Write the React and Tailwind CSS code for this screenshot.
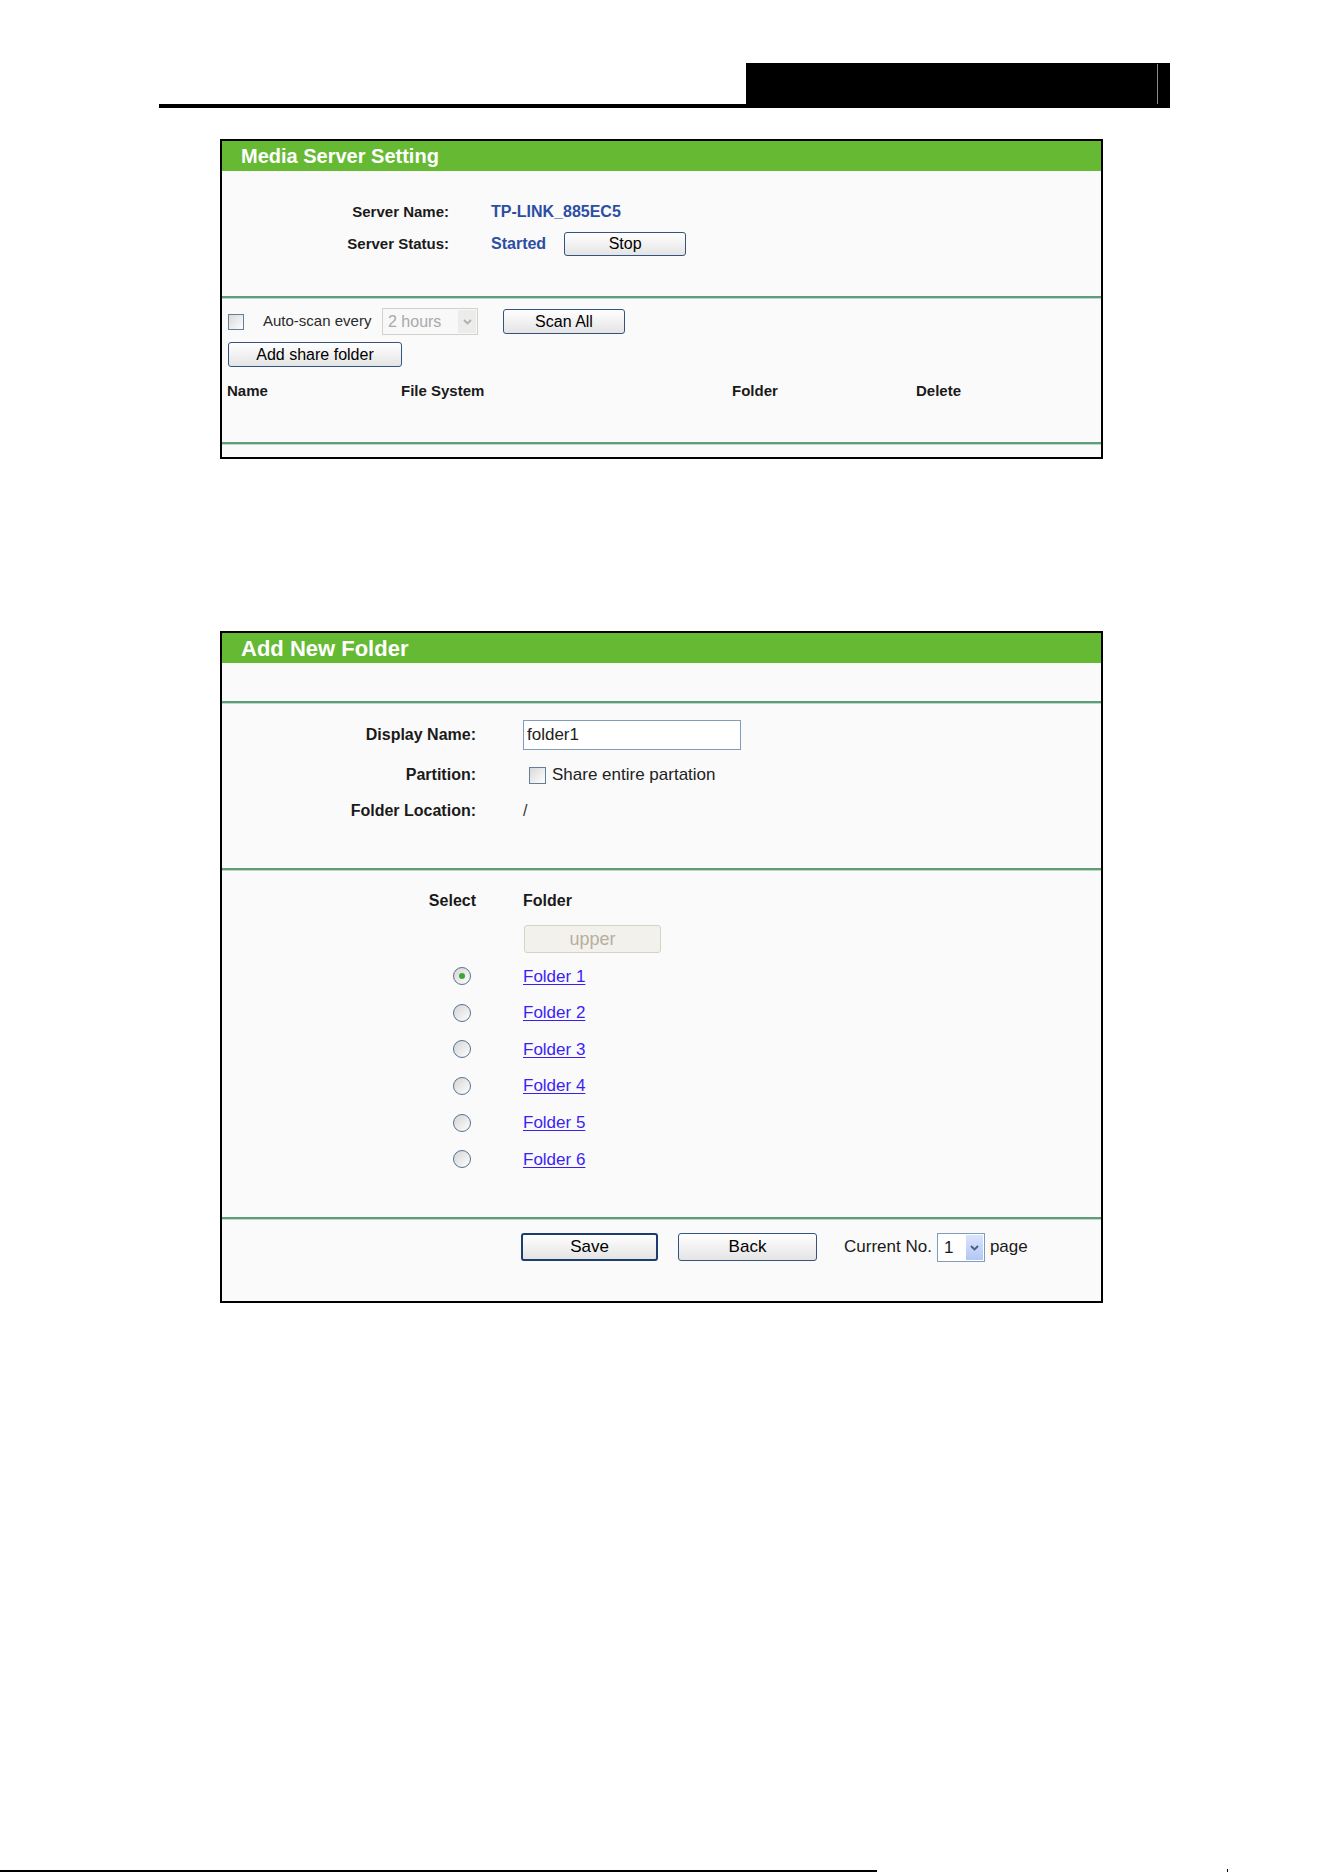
import React from 'react';
import clsx from 'clsx';

// Router admin panels: media server + add-folder dialog

const folders = ['Folder 1', 'Folder 2', 'Folder 3', 'Folder 4', 'Folder 5', 'Folder 6'];

const Btn = ({ children, className, strong }) => (
  <button
    className={clsx(
      'flex items-center justify-center rounded-[3px] bg-linear-to-b from-white to-[#e4e4e4] text-[16px] text-black',
      strong ? 'border-2 border-[#1c3d70]' : 'border border-[#34547f]',
      className
    )}
  >
    {children}
  </button>
);

const Check = ({ className }) => (
  <div className={clsx('border border-[#627f9c] bg-linear-to-br from-[#d9d9d9] to-white', className)} />
);

const Radio = ({ on }) => (
  <div className="flex h-[18px] w-[18px] items-center justify-center rounded-full border-[1.5px] border-[#56728f] bg-linear-to-br from-[#d4d4d4] to-white">
    {on && <div className="h-[6px] w-[6px] rounded-full bg-[#3ea33a]" />}
  </div>
);

const Chevron = ({ color }) => (
  <svg width="9" height="6" viewBox="0 0 9 6">
    <path d="M1 1l3.5 3.5L8 1" fill="none" stroke={color} strokeWidth="1.8" />
  </svg>
);

// double green rule between panel sections
const Sep = () => (
  <div>
    <div className="h-[2px] bg-[#5f9c77]" />
    <div className="h-px bg-[#b9dac6]" />
  </div>
);

const Panel = ({ title, titleSize, children }) => (
  <div className="ml-[220px] w-[883px] border-2 border-black bg-[#fafafa]">
    <div className={clsx('flex h-[30px] items-center bg-[#66b933] pl-[19px] font-bold text-white', titleSize)}>
      {title}
    </div>
    {children}
  </div>
);

export default function App() {
  return (
    <div className="flex h-[1872px] w-[1324px] flex-col overflow-hidden bg-white font-['Liberation_Sans',Arial,sans-serif] text-[#1a1a1a]">
      {/* page header rule */}
      <div className="ml-[159px] mt-[63px] flex w-[1011px] items-end">
        <div className="h-[4px] flex-1 bg-black" />
        <div className="flex h-[45px] w-[424px] justify-end bg-black pr-[12px] pt-[1px]">
          <div className="h-[40px] w-px bg-[#8a8a8a]" />
        </div>
      </div>

      <div className="mt-[31px]">
        <Panel title="Media Server Setting" titleSize="text-[20px]">
          <div className="h-[125px] pt-[25px]">
            <div className="grid grid-cols-[227px_1fr] text-[15px]">
              <div className="flex h-[32px] items-center justify-end font-bold">Server Name:</div>
              <div className="flex h-[32px] items-center pl-[42px] text-[16px] font-bold text-[#2c4ea3]">TP-LINK_885EC5</div>
              <div className="flex h-[32px] items-center justify-end font-bold">Server Status:</div>
              <div className="flex h-[32px] items-center pl-[42px]">
                <span className="text-[16px] font-bold text-[#2c4ea3]">Started</span>
                <Btn className="ml-[18px] h-[24px] w-[122px]">Stop</Btn>
              </div>
            </div>
          </div>
          <Sep />
          <div className="h-[143px] pl-[6px] pt-[9px]">
            <div className="flex h-[27px] items-center">
              <Check className="h-[16px] w-[16px]" />
              <span className="ml-[19px] w-[119px] text-[15px] text-[#2a2a2a]">Auto-scan every</span>
              <div className="flex h-[27px] w-[96px] border border-[#d2d2c8] bg-[#f8f8f8]">
                <span className="flex flex-1 items-center pl-[5px] text-[16px] text-[#a9a9a9]">2 hours</span>
                <div className="m-px flex w-[18px] items-center justify-center bg-[#ececec]">
                  <Chevron color="#b0b0b0" />
                </div>
              </div>
              <Btn className="ml-[25px] h-[25px] w-[122px]">Scan All</Btn>
            </div>
            <Btn className="mt-[7px] h-[25px] w-[174px]">Add share folder</Btn>
            <div className="ml-[-1px] mt-[13px] grid h-[18px] grid-cols-[174px_331px_184px_1fr] items-center text-[15px] font-bold">
              <span>Name</span>
              <span>File System</span>
              <span>Folder</span>
              <span>Delete</span>
            </div>
          </div>
          <Sep />
          <div className="h-[12px]" />
        </Panel>
      </div>

      <div className="mt-[172px]">
        <Panel title="Add New Folder" titleSize="text-[22px]">
          <div className="h-[38px]" />
          <Sep />
          <div className="h-[164px] pt-[11px]">
            <div className="grid grid-cols-[254px_1fr] text-[16px]">
              <div className="flex h-[40px] items-center justify-end font-bold">Display Name:</div>
              <div className="flex h-[40px] items-center pl-[47px]">
                <input
                  readOnly
                  defaultValue="folder1"
                  className="h-[30px] w-[218px] border border-[#7f9db9] bg-white pl-[3px] text-[17px] text-[#222] outline-none"
                />
              </div>
              <div className="flex h-[40px] items-center justify-end font-bold">Partition:</div>
              <div className="flex h-[40px] items-center pl-[53px]">
                <Check className="h-[17px] w-[17px]" />
                <span className="ml-[6px] text-[17px] text-[#222]">Share entire partation</span>
              </div>
              <div className="flex h-[32px] items-center justify-end font-bold">Folder Location:</div>
              <div className="flex h-[32px] items-center pl-[47px] text-[#333]">/</div>
            </div>
          </div>
          <Sep />
          <div className="h-[346px] pt-[15px]">
            <div className="grid grid-cols-[254px_1fr] text-[16px]">
              <div className="flex h-[30px] items-center justify-end font-bold">Select</div>
              <div className="flex h-[30px] items-center pl-[47px] font-bold">Folder</div>
              <div className="mt-[9px] h-[28px]" />
              <div className="mt-[9px] pl-[48px]">
                <div className="flex h-[28px] w-[137px] items-center justify-center rounded-[3px] border border-[#d6d2c6] bg-[#f3f1eb] text-[18px] text-[#b7ae9e]">
                  upper
                </div>
              </div>
            </div>
            <div className="mt-[5px]">
              {folders.map((f, i) => (
                <div key={f} className="grid h-[36.6px] grid-cols-[254px_1fr] items-center">
                  <div className="flex justify-end pr-[5px]">
                    <Radio on={i === 0} />
                  </div>
                  <a href="#" className="pl-[47px] text-[17px] text-[#3a1ff5] underline underline-offset-2">
                    {f}
                  </a>
                </div>
              ))}
            </div>
          </div>
          <Sep />
          <div className="flex h-[81px] items-start pl-[299px] pt-[13px]">
            <Btn strong className="h-[28px] w-[137px] text-[17px]">Save</Btn>
            <Btn className="ml-[20px] h-[28px] w-[139px] text-[17px]">Back</Btn>
            <span className="ml-[27px] flex h-[28px] items-center text-[17px]">Current No.</span>
            <div className="ml-[5px] flex h-[29px] w-[48px] border border-[#7f9db9] bg-white">
              <span className="flex flex-1 items-center pl-[6px] text-[17px]">1</span>
              <div className="m-px flex w-[17px] items-center justify-center bg-linear-to-b from-[#dae5fc] to-[#b3c7f3]">
                <Chevron color="#4a5d86" />
              </div>
            </div>
            <span className="ml-[5px] flex h-[28px] items-center text-[17px]">page</span>
          </div>
        </Panel>
      </div>

      {/* page footer rule */}
      <div className="mt-auto flex items-end">
        <div className="h-[2px] w-[877px] bg-black" />
        <div className="ml-[350px] h-[3px] w-px bg-black" />
      </div>
    </div>
  );
}
